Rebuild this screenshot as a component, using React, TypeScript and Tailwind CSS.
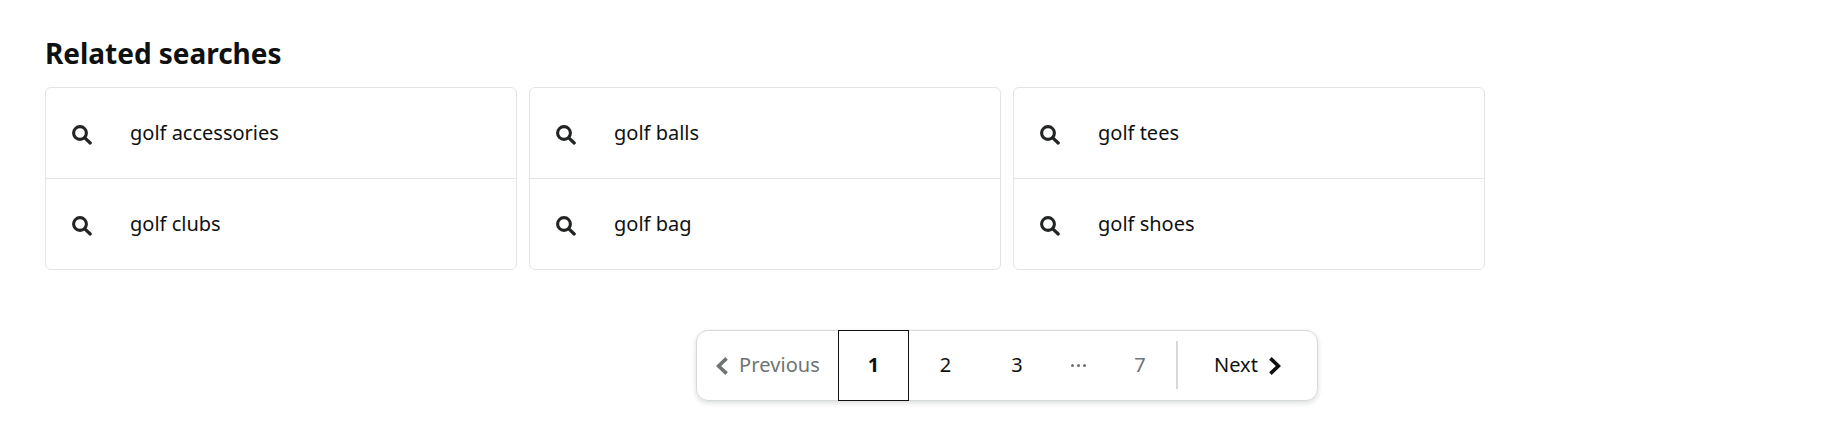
import React from 'react';

const columns = [
  ['golf accessories', 'golf clubs'],
  ['golf balls', 'golf bag'],
  ['golf tees', 'golf shoes'],
];

function SearchIcon() {
  return (
    <svg className="h-5 w-5 shrink-0" viewBox="0 0 20 20" fill="none" stroke="#222424">
      <circle cx="8" cy="8" r="6.4" strokeWidth="3.1" />
      <path d="M12.8 12.8 L18.2 18" strokeWidth="3.2" strokeLinecap="round" />
    </svg>
  );
}

function Chevron({ direction }: { direction: 'left' | 'right' }) {
  return (
    <svg className="h-[18px] w-3 shrink-0" viewBox="0 0 12 18" fill="none" stroke="currentColor" strokeWidth="3.6">
      <path d={direction === 'left' ? 'M10.6 1.4 L2.6 9 L10.6 16.6' : 'M1.4 1.4 L9.4 9 L1.4 16.6'} />
    </svg>
  );
}

export default function App() {
  return (
    <div className="h-[427px] bg-white pl-[45px] pt-8 font-['Noto_Sans',sans-serif] text-[#0f1111]">
      <h2 className="h-[55px] text-[28px] leading-[43px] font-bold tracking-[-0.03px] whitespace-nowrap">Related searches</h2>

      <div className="grid w-[1440px] grid-cols-3 gap-3">
        {columns.map((items) => (
          <div key={items[0]} className="divide-y divide-[#e3e5e5] rounded-md border border-[#e3e5e5]">
            {items.map((item, i) => (
              <a key={item} className={`flex items-center pl-[26px] ${i === 0 ? 'h-[91px]' : 'h-[90px]'}`}>
                <span className="pt-1"><SearchIcon /></span>
                <span className="ml-[38px] text-[20px] leading-7">{item}</span>
              </a>
            ))}
          </div>
        ))}
      </div>

      <nav className="mt-[60px] ml-[651px] flex h-[71px] w-[622px] items-center rounded-xl border border-[#d5d9d9] text-[20px] leading-7 shadow-[0_2px_5px_rgba(15,17,17,0.15)]">
        <span className="flex w-[141px] shrink-0 items-center pl-[19px] text-[#6f7373]">
          <Chevron direction="left" />
          <span className="ml-[11px] pb-0.5 tracking-[0.1px]">Previous</span>
        </span>
        <span className="-my-px flex h-[71px] w-[71px] shrink-0 items-center justify-center border border-[#0f1111] pb-0.5 font-bold">1</span>
        <a className="w-[73px] shrink-0 pb-0.5 text-center">2</a>
        <a className="w-[70px] shrink-0 pb-0.5 text-center">3</a>
        <span className="flex w-[52px] shrink-0 justify-center gap-[3px]">
          <i className="h-[3px] w-[3px] rounded-full bg-[#6f7373]" />
          <i className="h-[3px] w-[3px] rounded-full bg-[#6f7373]" />
          <i className="h-[3px] w-[3px] rounded-full bg-[#6f7373]" />
        </span>
        <span className="w-[72px] shrink-0 pb-0.5 text-center text-[#6f7373]">7</span>
        <span className="-mt-px h-12 w-0.5 shrink-0 bg-[#d5d9d9]" />
        <a className="flex items-center pl-9">
          <span className="w-[46px] pb-0.5">Next</span>
          <span className="ml-[9px] flex"><Chevron direction="right" /></span>
        </a>
      </nav>
    </div>
  );
}
